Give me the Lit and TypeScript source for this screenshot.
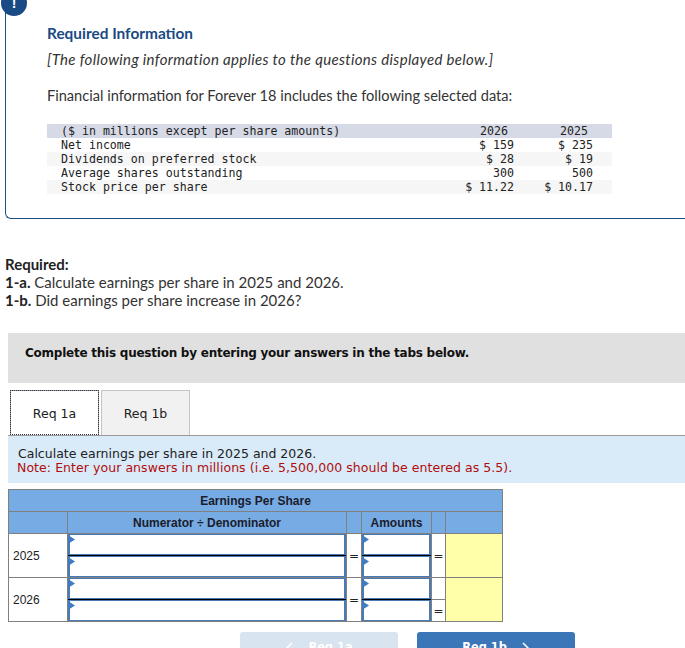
import { LitElement, html, css } from "lit";
import { customElement } from "lit/decorators.js";

const rows = [
  ["Net income", "$ 159", "$ 235"],
  ["Dividends on preferred stock", "$ 28", "$ 19"],
  ["Average shares outstanding", "300", "500"],
  ["Stock price per share", "$ 11.22", "$ 10.17"],
];

@customElement("app-root")
export class AppRoot extends LitElement {
  static styles = css`
    :host { display: block; width: 685px; height: 648px; overflow: hidden; position: relative; background: #fff; font-family: "Lato", "Liberation Sans", sans-serif; color: #333; }
    .badge { position: absolute; left: 1px; top: -10px; width: 26px; height: 26px; border-radius: 50%; background: #1a4a84; color: #fff; font: bold 14px/26px "Liberation Sans", sans-serif; text-align: center; }
    .card { margin-left: 5px; height: 219px; box-sizing: border-box; border-left: 1px solid #1f4e80; border-bottom: 1px solid #1f4e80; border-bottom-left-radius: 6px; padding: 25px 0 0 41px; }
    .title { font-size: 15.4px; font-weight: 700; color: #1a4a84; line-height: 16px; }
    .lead { font-size: 15px; font-style: italic; line-height: 18px; margin-top: 9px; letter-spacing: 0.33px; }
    .fin { font-size: 14.6px; line-height: 18px; margin-top: 19px; }
    .data { margin-top: 19px; width: 565px; font: 11.6px/15px "DejaVu Sans Mono", monospace; color: #222; }
    .dr { display: grid; grid-template-columns: 1fr 80px 79px; height: 14px; padding-left: 14px; padding-right: 19px; white-space: pre; }
    .dr > span:not(:first-child) { text-align: right; }
    .dr.head { background: #d6dae6; }
    .dr.head > span:not(:first-child) { padding-right: 6px; }
    .dr.head > span:last-child { padding-right: 5px; }
    .dr.alt { background: #f6f6f6; }
    .req { margin: 36px 0 0 5px; font-size: 15px; line-height: 18px; }
    .req b { font-weight: 700; color: #222; }
    .banner { margin: 24px 0 0 8px; height: 50px; background: #e0e0e0; padding-left: 17px; font: bold 12px/41px "DejaVu Sans", sans-serif; letter-spacing: -0.24px; color: #111; }
    .tabs { display: flex; gap: 2px; margin: 7px 0 0 10px; height: 45px; }
    .tab { width: 87px; height: 44px; border: 1px solid #c4c4c4; border-bottom: 0; background: #f1f1f1; text-align: center; font: 12.5px/46px "DejaVu Sans", sans-serif; color: #222; }
    .tab.on { background: #fff; border-color: #999; outline: 1px dotted #334; outline-offset: -1px; }
    .panel { margin-left: 8px; border-top: 1px solid #999; background: #d9eaf8; height: 48px; padding: 11px 0 0 10px; box-sizing: border-box; font: 12.5px/14px "DejaVu Sans", sans-serif; color: #222; }
    .note { color: #b00d0d; margin-left: -1px; letter-spacing: 0.06px; }
    table { border-collapse: collapse; margin: 6px 0 0 8px; table-layout: fixed; width: 494px; font-family: "Liberation Sans", sans-serif; }
    td, th { border: 1px solid #808080; padding: 0; box-sizing: border-box; }
    th { background: #76abe4; font-size: 12px; font-weight: 700; color: #1c1c2c; height: 22px; }
    .split { height: 44px; position: relative; }
    .yr { font: 12px "Liberation Sans", sans-serif; color: #222; padding-left: 4px; }
    .eq { text-align: center; font: 12px "DejaVu Sans", sans-serif; color: #222; }
    .yel { background: #ffffaa; }
    .frac { display: flex; flex-direction: column; height: 43px; }
    .inp { flex: 1; position: relative; border: solid #4a7ab4; border-width: 1px 2px; background: #fff; }
    .line { height: 1px; background: #000; flex: none; }
    .inp svg { position: absolute; left: -2px; top: 0; display: block; }
    .eqs { display: flex; flex-direction: column; height: 43px; }
    .eqs div { flex: 1; display: flex; align-items: center; justify-content: center; }
    .eqs div + div { border-top: 1px solid #808080; }
    .btns { display: flex; gap: 19px; margin: 10px 0 0 240px; }
    .btn { width: 158px; height: 40px; border-radius: 3px 3px 0 0; display: flex; justify-content: center; gap: 15px; font: bold 11.4px/31px "DejaVu Sans", sans-serif; color: #fff; background: #3b76b8; }
    .btn.off { background: #d9e4f1; }
    .btn svg { margin-top: 10px; display: block; }
  `;

  private input() {
    return html`<div class="inp"><svg width="7" height="9" viewBox="0 0 7 9"><path d="M0 0 L7 4.5 L0 9Z" fill="#3f7cc4"/></svg></div>`;
  }
  private frac() {
    return html`<div class="frac">${this.input()}<div class="line"></div>${this.input()}</div>`;
  }

  render() {
    return html`
      <div class="badge">!</div>
      <div class="card">
        <div class="title">Required Information</div>
        <div class="lead">[The following information applies to the questions displayed below.]</div>
        <div class="fin">Financial information for Forever 18 includes the following selected data:</div>
        <div class="data">
          <div class="dr head"><span>($ in millions except per share amounts)</span><span>2026</span><span>2025</span></div>
          ${rows.map((r, i) => html`<div class="dr ${i % 2 ? "alt" : ""}"><span>${r[0]}</span><span>${r[1]}</span><span>${r[2]}</span></div>`)}
        </div>
      </div>
      <div class="req">
        <div><b>Required:</b></div>
        <div><b>1-a.</b> Calculate earnings per share in 2025 and 2026.</div>
        <div><b>1-b.</b> Did earnings per share increase in 2026?</div>
      </div>
      <div class="banner">Complete this question by entering your answers in the tabs below.</div>
      <div class="tabs"><div class="tab on">Req 1a</div><div class="tab">Req 1b</div></div>
      <div class="panel">
        <div>Calculate earnings per share in 2025 and 2026.</div>
        <div class="note">Note: Enter your answers in millions (i.e. 5,500,000 should be entered as 5.5).</div>
      </div>
      <table>
        <colgroup><col style="width:59px"><col style="width:279px"><col style="width:15px"><col style="width:70px"><col style="width:14px"><col style="width:57px"></colgroup>
        <tr><th colspan="6">Earnings Per Share</th></tr>
        <tr><th></th><th>Numerator ÷ Denominator</th><th></th><th>Amounts</th><th></th><th></th></tr>
        <tr><td class="yr split">2025</td><td class="split">${this.frac()}</td><td class="eq split">=</td><td class="split">${this.frac()}</td><td class="eq split">=</td><td class="yel split"></td></tr>
        <tr><td class="yr split">2026</td><td class="split">${this.frac()}</td><td class="eq split">=</td><td class="split">${this.frac()}</td><td class="eq split"><div class="eqs"><div></div><div>=</div></div></td><td class="yel split"></td></tr>
      </table>
      <div class="btns">
        <div class="btn off"><svg width="8" height="14" viewBox="0 0 8 14"><path d="M7 1 L1 7 L7 13" fill="none" stroke="#fff" stroke-width="1.5"/></svg><span>Req 1a</span></div>
        <div class="btn"><span>Req 1b</span><svg width="8" height="14" viewBox="0 0 8 14"><path d="M1 1 L7 7 L1 13" fill="none" stroke="#fff" stroke-width="1.5"/></svg></div>
      </div>
    `;
  }
}
